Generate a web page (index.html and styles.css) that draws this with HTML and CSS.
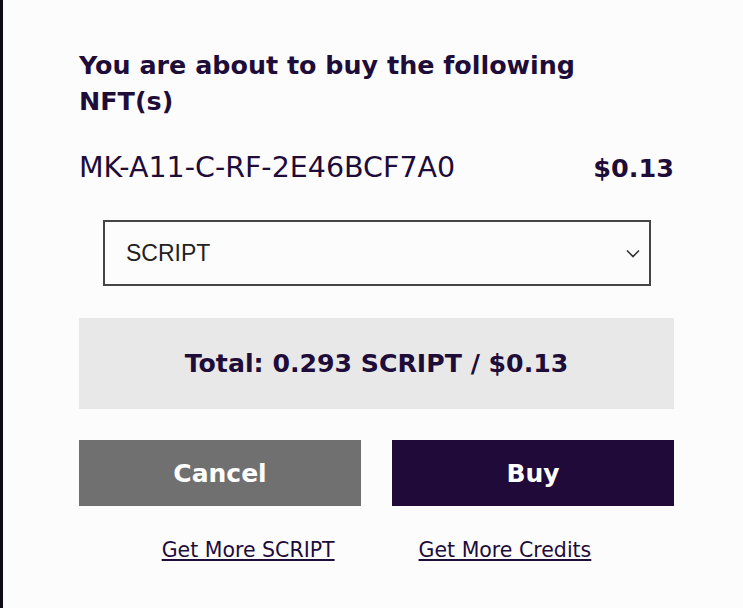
FILE: index.html
```html
<!DOCTYPE html>
<html>
<head>
<meta charset="utf-8">
<link rel="stylesheet" href="styles.css">
</head>
<body>
<div class="frame">
  <div class="dialog">
    <h2 class="title">You are about to buy the following NFT(s)</h2>
    <div class="item">
      <span class="item-name">MK-A11-C-RF-2E46BCF7A0</span>
      <span class="item-price">$0.13</span>
    </div>
    <div class="select">
      <span class="select-value">SCRIPT</span>
      <svg class="chevron" width="14" height="9" viewBox="0 0 14 9"><path d="M1 1.5 L7 7.5 L13 1.5" fill="none" stroke="#333" stroke-width="1.6"/></svg>
    </div>
    <div class="total">Total: 0.293 SCRIPT / $0.13</div>
    <div class="buttons">
      <div class="btn btn-cancel">Cancel</div>
      <div class="btn btn-buy">Buy</div>
    </div>
    <div class="links">
      <a class="link" href="#">Get More SCRIPT</a>
      <a class="link" href="#">Get More Credits</a>
    </div>
  </div>
</div>
</body>
</html>
```
FILE: styles.css
```css
html, body {
  margin: 0;
  padding: 0;
  background: #fdfcfd;
}
.frame {
  width: 743px;
  height: 608px;
  box-sizing: border-box;
  border-left: 3px solid #0e0a16;
  background: #fdfcfd;
}
.dialog {
  width: 595px;
  margin-left: 76px;
  padding-top: 47px;
  font-family: "DejaVu Sans", "Noto Sans", sans-serif;
  color: #1e0c39;
}
.title {
  margin: 0;
  font-size: 25.4px;
  line-height: 36px;
  font-weight: 700;
  width: 520px;
}
.item {
  display: flex;
  justify-content: space-between;
  align-items: baseline;
  margin-top: 32px;
  font-size: 28.5px;
  line-height: 34px;
}
.item-price {
  font-weight: 700;
  font-size: 25.5px;
}
.select {
  margin: 35px 23px 0 24px;
  height: 66px;
  box-sizing: border-box;
  border: 2px solid #454545;
  display: flex;
  align-items: center;
  justify-content: space-between;
  padding: 0 9px 0 21px;
  font-family: "Liberation Sans", Arial, sans-serif;
  font-size: 23px;
  color: #222;
}
.total {
  margin-top: 32px;
  height: 91px;
  background: #e9e8e9;
  display: flex;
  align-items: center;
  justify-content: center;
  font-size: 25.2px;
  font-weight: 700;
}
.buttons {
  margin-top: 31px;
  display: flex;
  gap: 31px;
}
.btn {
  flex: 1;
  height: 66px;
  display: flex;
  align-items: center;
  justify-content: center;
  color: #fff;
  font-size: 25px;
  font-weight: 700;
}
.btn-cancel {
  background: #707070;
}
.btn-buy {
  background: #200a3a;
}
.links {
  margin-top: 32px;
  display: flex;
  justify-content: center;
  gap: 84px;
}
.link {
  color: #1e0c39;
  font-size: 20.5px;
  line-height: 24px;
}
```
